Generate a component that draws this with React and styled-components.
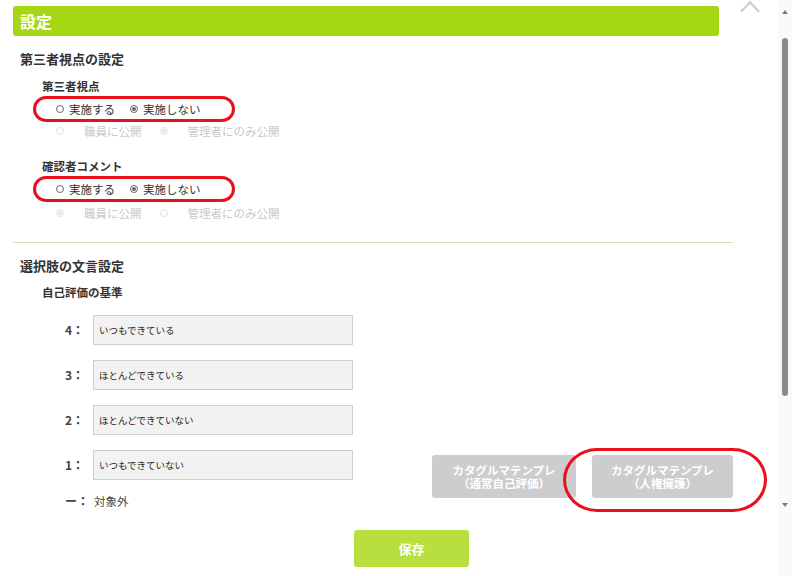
import React from "react";
import styled, { createGlobalStyle } from "styled-components";

const GlobalStyle = createGlobalStyle`
  html, body {
    margin: 0;
    padding: 0;
    background: #fff;
  }
  body {
    font-family: "Noto Sans CJK JP", "Noto Sans", sans-serif;
    color: #333;
  }
`;

const Page = styled.div`
  display: flex;
  width: 792px;
  height: 576px;
  overflow: hidden;
`;

const Main = styled.div`
  position: relative;
  flex: 1;
  padding: 6px 0 0 13px;
  box-sizing: border-box;
`;

const TopChevron = styled.div`
  position: absolute;
  top: 4px;
  left: 743px;
  width: 12px;
  height: 12px;
  border-top: 2px solid #cbcbcb;
  border-left: 2px solid #cbcbcb;
  transform: rotate(45deg);
`;

const Content = styled.div`
  width: 720px;
`;

const Header = styled.h1`
  width: 706px;
  height: 30px;
  margin: 0;
  padding-left: 7px;
  box-sizing: border-box;
  background: #a6d714;
  border-radius: 3px;
  color: #fff;
  font-size: 16px;
  font-weight: bold;
  line-height: 30px;
`;

const SectionTitle = styled.h2`
  margin: ${(p) => p.$top}px 0 0;
  padding-left: 7px;
  font-size: 13px;
  font-weight: bold;
  line-height: 20px;
  color: #333;
`;

const SubTitle = styled.h3`
  margin: ${(p) => p.$top}px 0 0;
  padding-left: 29px;
  font-size: 11.5px;
  font-weight: bold;
  line-height: 18px;
  color: #333;
`;

const Ring = styled.div`
  display: flex;
  align-items: center;
  width: 202px;
  height: 26px;
  margin: 1px 0 0 20px;
  padding-left: 20px;
  box-sizing: border-box;
  border: 3px solid #e8101a;
  border-radius: 13px;
`;

const RadioRow = styled.div`
  display: flex;
  align-items: center;
  height: 18px;
  padding-left: 43px;
  margin-top: ${(p) => p.$top || 0}px;
`;

const RadioItem = styled.label`
  display: flex;
  align-items: center;
  gap: ${(p) => (p.$muted ? 20 : 5)}px;
  margin-right: ${(p) => (p.$muted ? 18 : 15)}px;
  font-size: 11.5px;
  line-height: 18px;
  color: ${(p) => (p.$muted ? "#c9c9c9" : "#333")};
  white-space: nowrap;
`;

const Dot = styled.span`
  position: relative;
  width: 8px;
  height: 8px;
  box-sizing: border-box;
  border-radius: 50%;
  border: 1px solid ${(p) => (p.$muted ? "#e2e2e2" : "#666")};
  background: #fff;
  &::after {
    content: "";
    display: ${(p) => (p.$checked ? "block" : "none")};
    position: absolute;
    left: 1px;
    top: 1px;
    width: 4px;
    height: 4px;
    border-radius: 50%;
    background: ${(p) => (p.$muted ? "#e0e0e0" : "#666")};
  }
`;

const Divider = styled.hr`
  margin: 20px 0 0;
  border: 0;
  border-top: 1px solid #e6dbc1;
`;

const CriteriaArea = styled.div`
  display: flex;
  align-items: flex-end;
  justify-content: space-between;
  margin-top: 14px;
`;

const CriteriaList = styled.div`
  display: flex;
  flex-direction: column;
  gap: 15px;
  padding-left: 52px;
`;

const CriteriaRow = styled.div`
  display: flex;
  align-items: center;
  height: ${(p) => (p.$plain ? 18 : 30)}px;
  margin-top: ${(p) => (p.$plain ? -3 : 0)}px;
`;

const RowLabel = styled.span`
  width: 28px;
  font-size: 12px;
  font-weight: bold;
  color: #444;
  margin-top: -2px;
`;

const TextBox = styled.input`
  width: 260px;
  height: 30px;
  box-sizing: border-box;
  padding: 0 5px;
  border: 1px solid #cfcfcf;
  background: #f2f2f2;
  font-family: inherit;
  font-size: 9.5px;
  color: #222;
  outline: none;
`;

const PlainValue = styled.span`
  font-size: 11.5px;
  color: #444;
  padding-left: 1px;
`;

const TemplateButtons = styled.div`
  display: flex;
  gap: 16px;
  margin-bottom: 12px;
`;

const RingWrap = styled.div`
  position: relative;
  &::after {
    content: "";
    position: absolute;
    top: -7px;
    bottom: -14px;
    left: -29px;
    right: -34px;
    border: 3px solid #e8101a;
    border-radius: 34px / 32px;
    pointer-events: none;
  }
`;

const TemplateButton = styled.button`
  display: flex;
  flex-direction: column;
  align-items: center;
  justify-content: center;
  width: ${(p) => p.$w}px;
  height: 43px;
  padding: 0;
  border: 0;
  border-radius: 3px;
  background: #cdcdcd;
  color: #fff;
  font-family: inherit;
  font-size: 11.5px;
  font-weight: bold;
  line-height: 13px;
`;

const Footer = styled.div`
  padding: 20px 0 0 341px;
`;

const SaveButton = styled.button`
  width: 115px;
  height: 37px;
  border: 0;
  border-radius: 3px;
  background: #b7df40;
  color: #fff;
  font-family: inherit;
  font-size: 13px;
  font-weight: bold;
`;

const ScrollTrack = styled.div`
  position: relative;
  width: 14px;
  background: #fafafa;
  display: flex;
  flex-direction: column;
  align-items: center;
`;

const Arrow = styled.span`
  width: 0;
  height: 0;
  border-left: 3.5px solid transparent;
  border-right: 3.5px solid transparent;
  ${(p) =>
    p.$down
      ? "border-top: 4px solid #7a7a7a; margin-top: 107px;"
      : "border-bottom: 4px solid #7a7a7a; margin-top: 10px;"}
`;

const Thumb = styled.span`
  width: 6px;
  height: 358px;
  margin-top: 24px;
  border-radius: 3px;
  background: #8c8c8c;
`;

const viewpoints = [
  { title: "第三者視点", top: 8, scope: "right" },
  { title: "確認者コメント", top: 17, scope: "left" },
];

const criteria = [
  { label: "4：", value: "いつもできている" },
  { label: "3：", value: "ほとんどできている" },
  { label: "2：", value: "ほとんどできていない" },
  { label: "1：", value: "いつもできていない" },
];

const Radio = ({ children, checked, muted }) => (
  <RadioItem $muted={muted}>
    <Dot $checked={checked} $muted={muted} />
    {children}
  </RadioItem>
);

const App = () => {
  return (
    <>
      <GlobalStyle />
      <Page>
        <Main>
          <TopChevron />
          <Content>
            <Header>設定</Header>
            <SectionTitle $top={13}>第三者視点の設定</SectionTitle>
            {viewpoints.map((v, i) => (
              <div key={v.title}>
                <SubTitle $top={v.top}>{v.title}</SubTitle>
                <Ring>
                  <Radio>実施する</Radio>
                  <Radio checked>実施しない</Radio>
                </Ring>
                <RadioRow $top={i === 0 ? 0 : 2}>
                  <Radio muted checked={v.scope === "left"}>
                    職員に公開
                  </Radio>
                  <Radio muted checked={v.scope === "right"}>
                    管理者にのみ公開
                  </Radio>
                </RadioRow>
              </div>
            ))}
            <Divider />
            <SectionTitle $top={13}>選択肢の文言設定</SectionTitle>
            <SubTitle $top={7}>自己評価の基準</SubTitle>
            <CriteriaArea>
              <CriteriaList>
                {criteria.map((c) => (
                  <CriteriaRow key={c.label}>
                    <RowLabel>{c.label}</RowLabel>
                    <TextBox defaultValue={c.value} />
                  </CriteriaRow>
                ))}
                <CriteriaRow $plain>
                  <RowLabel>ー：</RowLabel>
                  <PlainValue>対象外</PlainValue>
                </CriteriaRow>
              </CriteriaList>
              <TemplateButtons>
                <TemplateButton $w={144}>
                  <span>カタグルマテンプレ</span>
                  <span>（通常自己評価）</span>
                </TemplateButton>
                <RingWrap>
                  <TemplateButton $w={141}>
                    <span>カタグルマテンプレ</span>
                    <span>（人権擁護）</span>
                  </TemplateButton>
                </RingWrap>
              </TemplateButtons>
            </CriteriaArea>
            <Footer>
              <SaveButton>保存</SaveButton>
            </Footer>
          </Content>
        </Main>
        <ScrollTrack>
          <Arrow />
          <Thumb />
          <Arrow $down />
        </ScrollTrack>
      </Page>
    </>
  );
};

export default App;
